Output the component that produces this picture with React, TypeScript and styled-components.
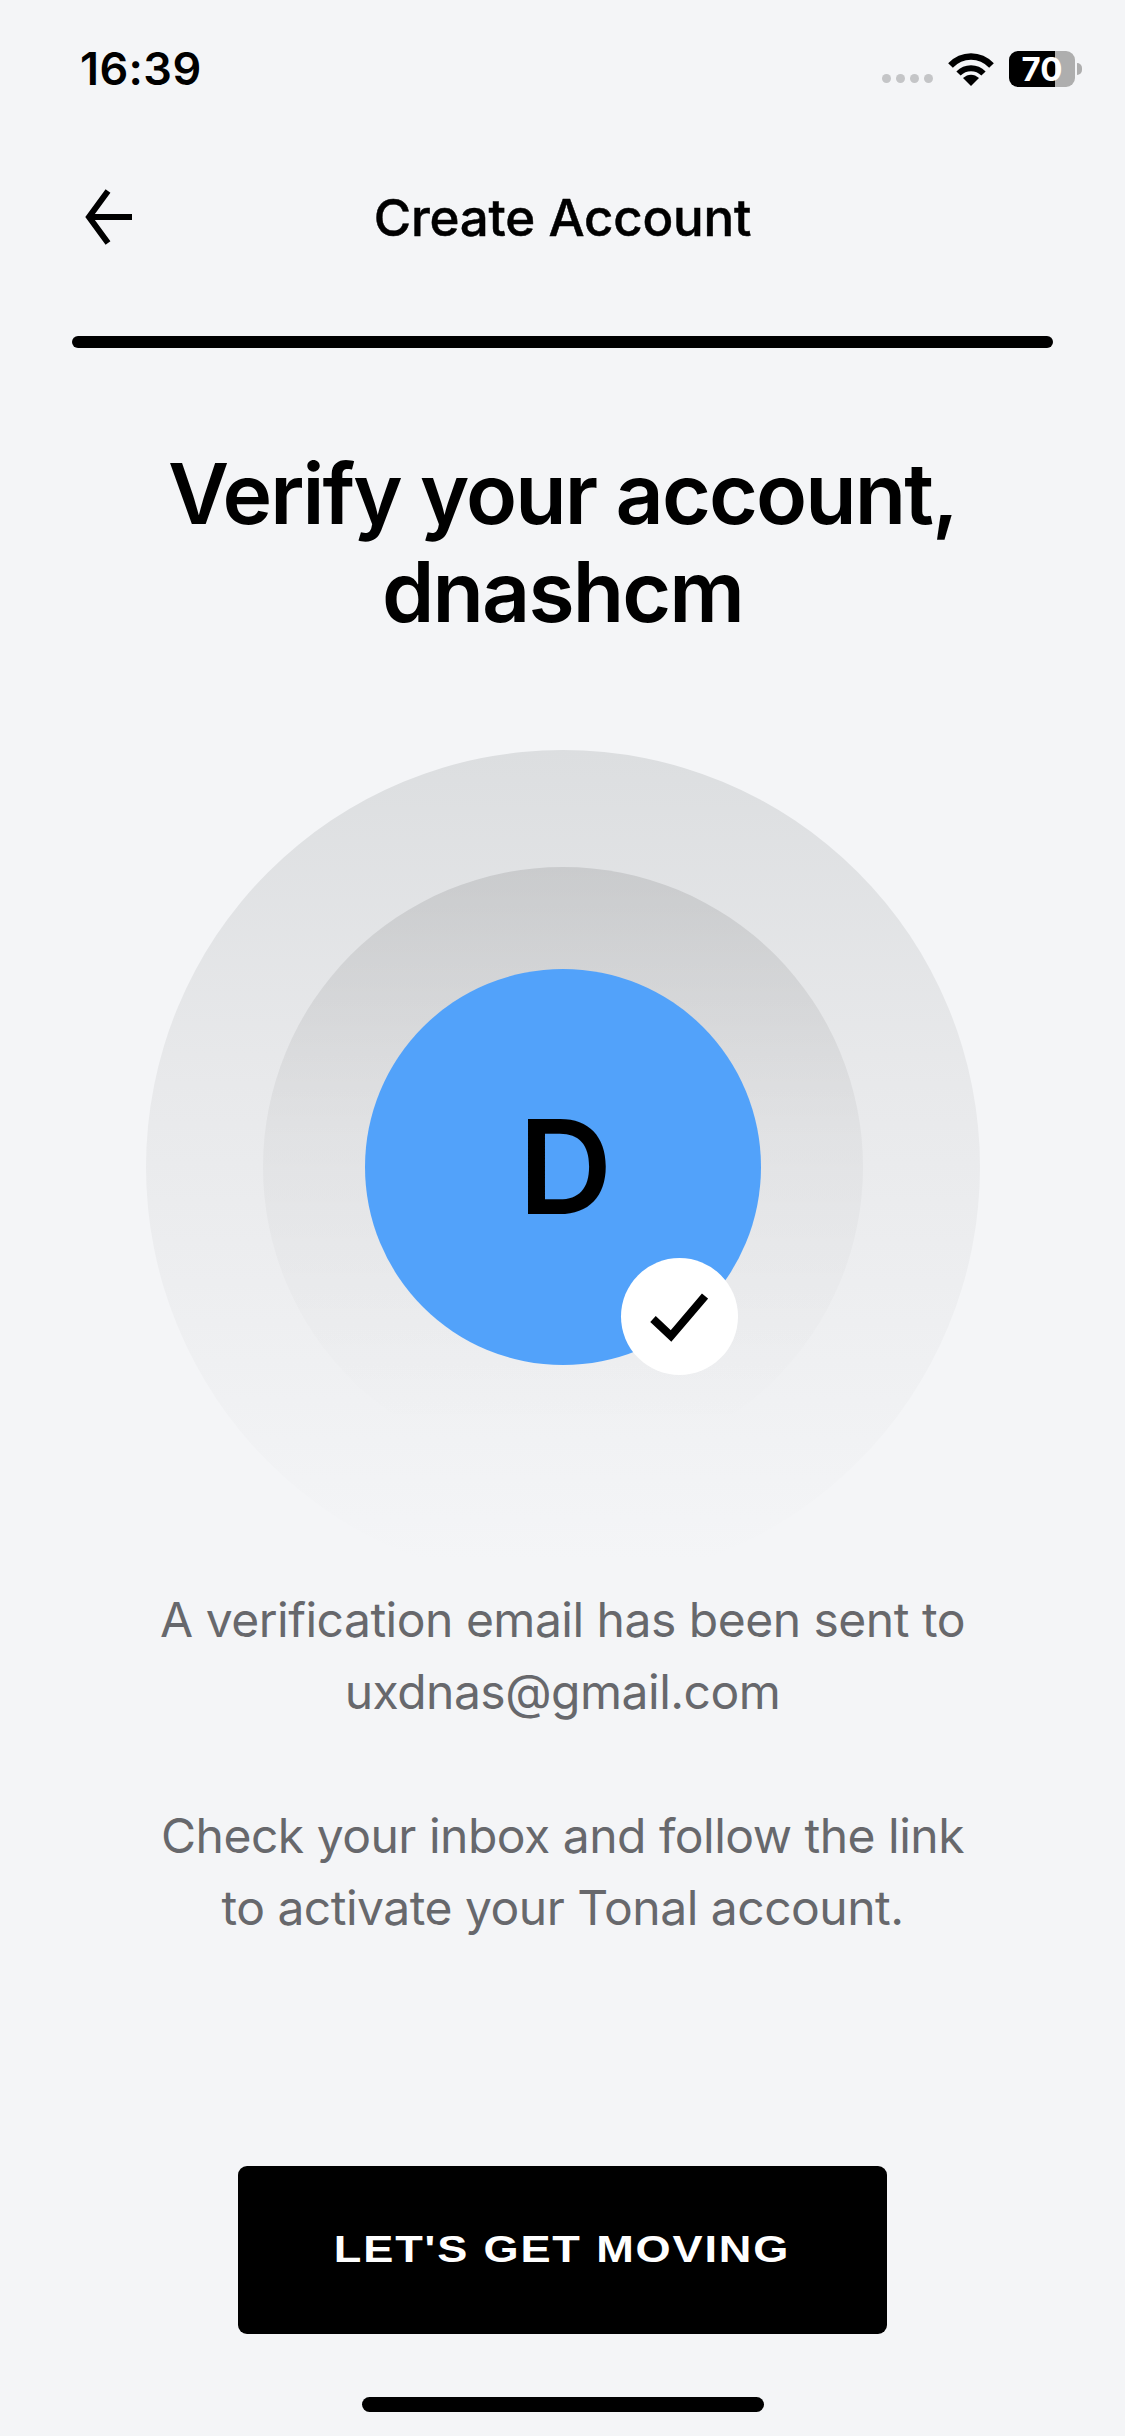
import styled, { createGlobalStyle } from "styled-components";

const GlobalStyle = createGlobalStyle`
  html, body {
    margin: 0;
    padding: 0;
    background: #f4f5f7;
  }
  * {
    box-sizing: border-box;
  }
`;

const Page = styled.div`
  width: 1125px;
  height: 2436px;
  display: flex;
  flex-direction: column;
  align-items: center;
  background: #f4f5f7;
  color: #000;
  font-family: Inter, "Liberation Sans", sans-serif;
  overflow: hidden;
`;

const StatusBar = styled.div`
  width: 100%;
  height: 87px;
  padding: 51px 50px 0 80px;
  display: flex;
  align-items: center;
  justify-content: space-between;
`;
const Clock = styled.span`
  font-size: 45px;
  font-weight: 600;
  line-height: 36px;
  letter-spacing: 0.4px;
`;
const StatusIcons = styled.div`
  display: flex;
  align-items: center;
`;
const SignalDots = styled.div`
  display: flex;
  gap: 5px;
  margin: 18px 15px 0 0;
`;
const SignalDot = styled.i`
  display: block;
  width: 9px;
  height: 9px;
  border-radius: 50%;
  background: #c4c5c7;
`;
const Battery = styled.div`
  width: 66px;
  height: 36px;
  margin-left: 15px;
  border-radius: 9px;
  background: linear-gradient(90deg, #000 70%, #aeaeae 70%);
  color: #fff;
  font-size: 33px;
  font-weight: 700;
  line-height: 36px;
  text-align: center;
  position: relative;
  &::after {
    content: "";
    position: absolute;
    left: 68px;
    top: 12px;
    width: 5px;
    height: 12px;
    border-radius: 0 6px 6px 0;
    background: #aeaeae;
  }
`;

const Header = styled.div`
  width: 100%;
  height: 100px;
  margin-top: 80px;
  padding: 0 80px 0 84px;
  display: grid;
  grid-template-columns: 1fr auto 1fr;
  align-items: center;
`;
const BackButton = styled.button`
  width: 60px;
  height: 60px;
  padding: 0;
  border: 0;
  background: none;
  display: flex;
  align-items: center;
`;
const HeaderTitle = styled.h1`
  margin: 0 4px 0 0;
  font-size: 51px;
  font-weight: 500;
  letter-spacing: -0.2px;
  -webkit-text-stroke: 0.5px #000;
`;

const Progress = styled.div`
  width: 981px;
  height: 12px;
  margin-top: 69px;
  border-radius: 6px;
  background: #000;
`;

const Title = styled.h2`
  margin: 97px 0 0;
  font-size: 84px;
  font-weight: 600;
  line-height: 98px;
  letter-spacing: -1.9px;
  text-align: center;
`;

const OuterRing = styled.div`
  width: 834px;
  height: 834px;
  margin-top: 109px;
  border-radius: 50%;
  background: linear-gradient(180deg, #dcdee0 0%, #e8e9eb 40%, #f4f5f7 97%);
  display: grid;
  place-items: center;
`;
const MiddleRing = styled.div`
  width: 600px;
  height: 600px;
  border-radius: 50%;
  background: linear-gradient(
    180deg,
    rgba(0, 0, 0, 0.1) 0%,
    rgba(0, 0, 0, 0.035) 45%,
    rgba(0, 0, 0, 0) 94%
  );
  display: grid;
  place-items: center;
`;
const Avatar = styled.div`
  width: 396px;
  height: 396px;
  padding-left: 6px;
  border-radius: 50%;
  background: #52a2fa;
  display: grid;
  place-items: center;
  position: relative;
  font-size: 130px;
  font-weight: 600;
  line-height: 1;
`;
const VerifiedBadge = styled.div`
  position: absolute;
  left: 256px;
  top: 289px;
  width: 117px;
  height: 117px;
  border-radius: 50%;
  background: #fff;
  display: grid;
  place-items: center;
`;

const Message = styled.p<{ $gap: number }>`
  margin: ${(p) => p.$gap}px 0 0;
  font-size: 48px;
  font-weight: 400;
  line-height: 72px;
  letter-spacing: -0.5px;
  color: #67686c;
  text-align: center;
`;

const PrimaryButton = styled.button`
  width: 649px;
  height: 168px;
  margin-top: auto;
  border: 0;
  border-radius: 9px;
  background: #000;
  color: #fff;
  font-family: "Liberation Sans", Arial, sans-serif;
  font-size: 37px;
  font-weight: 700;
  letter-spacing: 1.5px;
  text-transform: uppercase;
`;
const ButtonLabel = styled.span`
  display: inline-block;
  transform: scaleX(1.22);
`;

const HomeIndicator = styled.div`
  width: 402px;
  height: 15px;
  margin: 63px 0 24px;
  border-radius: 8px;
  background: #000;
`;

export default function App() {
  return (
    <Page>
      <GlobalStyle />
      <StatusBar>
        <Clock>16:39</Clock>
        <StatusIcons>
          <SignalDots>
            <SignalDot />
            <SignalDot />
            <SignalDot />
            <SignalDot />
          </SignalDots>
          <svg width="46" height="34" viewBox="0 0 46 34">
            <path d="M2.5 13.5C14 1.5 32 1.5 43.5 13.5" fill="none" stroke="#000" strokeWidth="6.5" />
            <path d="M10.5 21.5C17.5 14.5 28.5 14.5 35.5 21.5" fill="none" stroke="#000" strokeWidth="6" />
            <path d="M23 34L15 26C20 21.5 26 21.5 31 26Z" fill="#000" />
          </svg>
          <Battery>70</Battery>
        </StatusIcons>
      </StatusBar>

      <Header>
        <BackButton aria-label="Back">
          <svg width="50" height="56" viewBox="0 0 50 56">
            <path d="M24 2L5 28L24 54M5 28H48" fill="none" stroke="#000" strokeWidth="6" />
          </svg>
        </BackButton>
        <HeaderTitle>Create Account</HeaderTitle>
      </Header>
      <Progress />

      <Title>
        Verify your account,
        <br />
        dnashcm
      </Title>

      <OuterRing>
        <MiddleRing>
          <Avatar>
            D
            <VerifiedBadge>
              <svg width="58" height="50" viewBox="0 0 58 50">
                <path d="M3 27L21 44L55 4" fill="none" stroke="#000" strokeWidth="8" />
              </svg>
            </VerifiedBadge>
          </Avatar>
        </MiddleRing>
      </OuterRing>

      <Message $gap={0}>
        A verification email has been sent to
        <br />
        uxdnas@gmail.com
      </Message>
      <Message $gap={72}>
        Check your inbox and follow the link
        <br />
        to activate your Tonal account.
      </Message>

      <PrimaryButton>
        <ButtonLabel>Let's get moving</ButtonLabel>
      </PrimaryButton>
      <HomeIndicator />
    </Page>
  );
}
